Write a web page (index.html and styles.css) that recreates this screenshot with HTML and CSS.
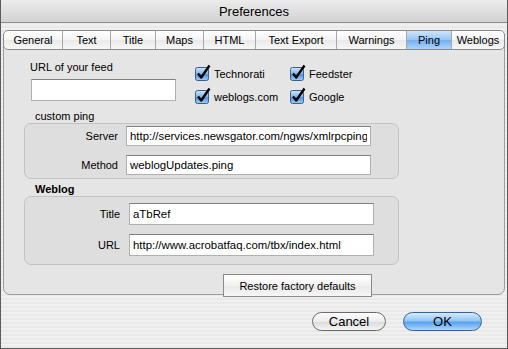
FILE: index.html
```html
<!DOCTYPE html>
<html lang="en">
<head>
    <meta charset="UTF-8">
    <title>Preferences</title>
    <link rel="stylesheet" href="styles.css">
</head>
<body>
    <div class="window">
        <div class="titlebar">Preferences</div>
        <div class="content">
            <div class="tabs">
                <span class="tab">General</span>
                <span class="tab">Text</span>
                <span class="tab">Title</span>
                <span class="tab">Maps</span>
                <span class="tab">HTML</span>
                <span class="tab">Text Export</span>
                <span class="tab">Warnings</span>
                <span class="tab selected">Ping</span>
                <span class="tab">Weblogs</span>
            </div>
            <div class="panel">
                <div class="top">
                    <div class="feed">
                        <label class="feed-label" for="feed">URL of your feed</label>
                        <input class="field feed-field" type="text" id="feed">
                    </div>
                    <div class="services">
                        <label class="check">
                            <svg class="box" width="16" height="17" viewBox="0 0 16 17">
                                <defs>
                                    <linearGradient id="aquaBox" x1="0" y1="0" x2="0" y2="1">
                                        <stop offset="0" stop-color="#cfe5fb"/>
                                        <stop offset="0.5" stop-color="#7fb6ee"/>
                                        <stop offset="0.55" stop-color="#4f95e2"/>
                                        <stop offset="1" stop-color="#9fd0fb"/>
                                    </linearGradient>
                                </defs>
                                <rect x="0.5" y="3.5" width="13" height="13" rx="2" fill="url(#aquaBox)" stroke="#3b5f8f"/>
                                <path d="M3 9.5 L6.2 13.5 L14.5 1.5" fill="none" stroke="#000" stroke-width="2.4" stroke-linejoin="round"/>
                            </svg>Technorati
                        </label>
                        <label class="check">
                            <svg class="box" width="16" height="17" viewBox="0 0 16 17">
                                <rect x="0.5" y="3.5" width="13" height="13" rx="2" fill="url(#aquaBox)" stroke="#3b5f8f"/>
                                <path d="M3 9.5 L6.2 13.5 L14.5 1.5" fill="none" stroke="#000" stroke-width="2.4" stroke-linejoin="round"/>
                            </svg>Feedster
                        </label>
                        <label class="check">
                            <svg class="box" width="16" height="17" viewBox="0 0 16 17">
                                <rect x="0.5" y="3.5" width="13" height="13" rx="2" fill="url(#aquaBox)" stroke="#3b5f8f"/>
                                <path d="M3 9.5 L6.2 13.5 L14.5 1.5" fill="none" stroke="#000" stroke-width="2.4" stroke-linejoin="round"/>
                            </svg>weblogs.com
                        </label>
                        <label class="check">
                            <svg class="box" width="16" height="17" viewBox="0 0 16 17">
                                <rect x="0.5" y="3.5" width="13" height="13" rx="2" fill="url(#aquaBox)" stroke="#3b5f8f"/>
                                <path d="M3 9.5 L6.2 13.5 L14.5 1.5" fill="none" stroke="#000" stroke-width="2.4" stroke-linejoin="round"/>
                            </svg>Google
                        </label>
                    </div>
                </div>

                <div class="group-title">custom ping</div>
                <div class="group group-ping">
                    <div class="row">
                        <span class="row-label">Server</span>
                        <input class="field" type="text" value="http://services.newsgator.com/ngws/xmlrpcping">
                    </div>
                    <div class="row">
                        <span class="row-label">Method</span>
                        <input class="field" type="text" value="weblogUpdates.ping">
                    </div>
                </div>

                <div class="group-title bold">Weblog</div>
                <div class="group group-weblog">
                    <div class="row">
                        <span class="row-label">Title</span>
                        <input class="field" type="text" value="aTbRef">
                    </div>
                    <div class="row">
                        <span class="row-label">URL</span>
                        <input class="field" type="text" value="http://www.acrobatfaq.com/tbx/index.html">
                    </div>
                </div>

                <button class="restore">Restore factory defaults</button>
            </div>
            <div class="actions">
                <button class="aqua">Cancel</button>
                <button class="aqua aqua-default">OK</button>
            </div>
        </div>
    </div>
</body>
</html>
```

FILE: styles.css
```css
* {
    box-sizing: border-box;
}
body {
    margin: 0;
    font-family: "Liberation Sans", Arial, sans-serif;
    font-size: 11px;
    color: #000;
}
.window {
    width: 508px;
    height: 349px;
    border: 1px solid #5b5b5b;
    border-top: none;
    background: repeating-linear-gradient(#f0f0f0 0 2px, #e9e9e9 2px 4px);
}
.titlebar {
    height: 23px;
    border-bottom: 1px solid #8e8e8e;
    background: linear-gradient(#ececec, #d2d2d2);
    font-size: 13px;
    line-height: 23px;
    text-align: center;
}
.content {
    padding-top: 7px;
}

/* tab strip */
.tabs {
    position: relative;
    z-index: 1;
    display: flex;
    height: 20px;
    margin-left: 2px;
    width: 502px;
    border: 1px solid #8a8a8a;
    border-radius: 5px;
    overflow: hidden;
    background: linear-gradient(#ffffff, #f4f4f4 50%, #e9e9e9 51%, #f7f7f7);
}
.tab {
    flex: none;
    text-align: center;
    line-height: 18px;
    border-left: 1px solid #a8a8a8;
}
.tab:first-child { border-left: none; width: 58px; }
.tab:nth-child(2) { width: 48px; }
.tab:nth-child(3) { width: 45px; }
.tab:nth-child(4) { width: 48px; }
.tab:nth-child(5) { width: 52px; }
.tab:nth-child(6) { width: 81px; }
.tab:nth-child(7) { width: 70px; }
.tab:nth-child(8) { width: 45px; }
.tab:nth-child(9) { width: 53px; }
.tab.selected {
    background: linear-gradient(#cde4fb, #95c5f3 50%, #74aeee 51%, #acd5fb);
}

/* tab body */
.panel {
    margin: -10px 2px 0 2px;
    border: 1px solid #9d9d9d;
    border-radius: 4px 4px 7px 7px;
    background: #e5e5e5;
}
.top {
    display: flex;
    padding: 19px 0 0 26px;
}
.feed {
    display: flex;
    flex-direction: column;
    align-items: flex-start;
}
.feed-label {
    line-height: 14px;
}
.services {
    display: grid;
    grid-template-columns: 95px auto;
    grid-auto-rows: 23px;
    margin: 2px 0 0 19px;
}
.check {
    display: flex;
    align-items: center;
    gap: 3px;
}
.box {
    margin-top: -3px;
}

.group-title {
    margin: 1px 0 0 31px;
    line-height: 14px;
}
.group-title.bold {
    margin-top: 3px;
    font-weight: bold;
}
.group {
    width: 375px;
    margin-left: 20px;
    border: 1px solid #c3c3c3;
    border-radius: 7px;
    background: #dedede;
    display: flex;
    flex-direction: column;
    gap: 9px;
}
.group-ping {
    padding: 2px 0 3px;
}
.group-weblog {
    padding: 6px 0 8px;
}
.row {
    display: flex;
    align-items: center;
}
.row-label {
    text-align: right;
}
.group-ping .row-label {
    width: 93px;
    margin-right: 8px;
}
.group-weblog .row-label {
    width: 95px;
    margin-right: 9px;
}
.field {
    width: 245px;
    height: 20px;
    padding: 0 3px;
    border: 1px solid #b0b0b0;
    border-top-color: #808080;
    background: #fff;
    font-family: "Liberation Sans", Arial, sans-serif;
    font-size: 11.4px;
    outline: none;
}
.group-weblog .field {
    height: 22px;
}
.feed .feed-field {
    margin: 5px 0 0 1px;
    width: 145px;
    height: 22px;
}

.restore {
    display: block;
    width: 149px;
    height: 23px;
    margin: 9px 0 -3px 219px;
    border: 1px solid #8a8a8a;
    background: linear-gradient(#ffffff, #f1f1f1 50%, #e9e9e9 51%, #f6f6f6);
    font-family: "Liberation Sans", Arial, sans-serif;
    font-size: 11px;
    padding: 0;
}

/* dialog buttons */
.actions {
    display: flex;
    justify-content: flex-end;
    gap: 17px;
    padding: 17px 25px 0 0;
}
.aqua {
    width: 74px;
    height: 19px;
    padding: 0;
    border: 1px solid #6c6c6c;
    border-radius: 10px;
    background: linear-gradient(#fdfdfd, #ececec 50%, #d9d9d9 51%, #f6f6f6);
    font-family: "Liberation Sans", Arial, sans-serif;
    font-size: 13px;
    line-height: 17px;
}
.aqua-default {
    width: 79px;
    border-color: #3a639c;
    background: linear-gradient(#d6eafd, #92c5f5 45%, #5ba2ee 55%, #a9d8ff);
}
```
